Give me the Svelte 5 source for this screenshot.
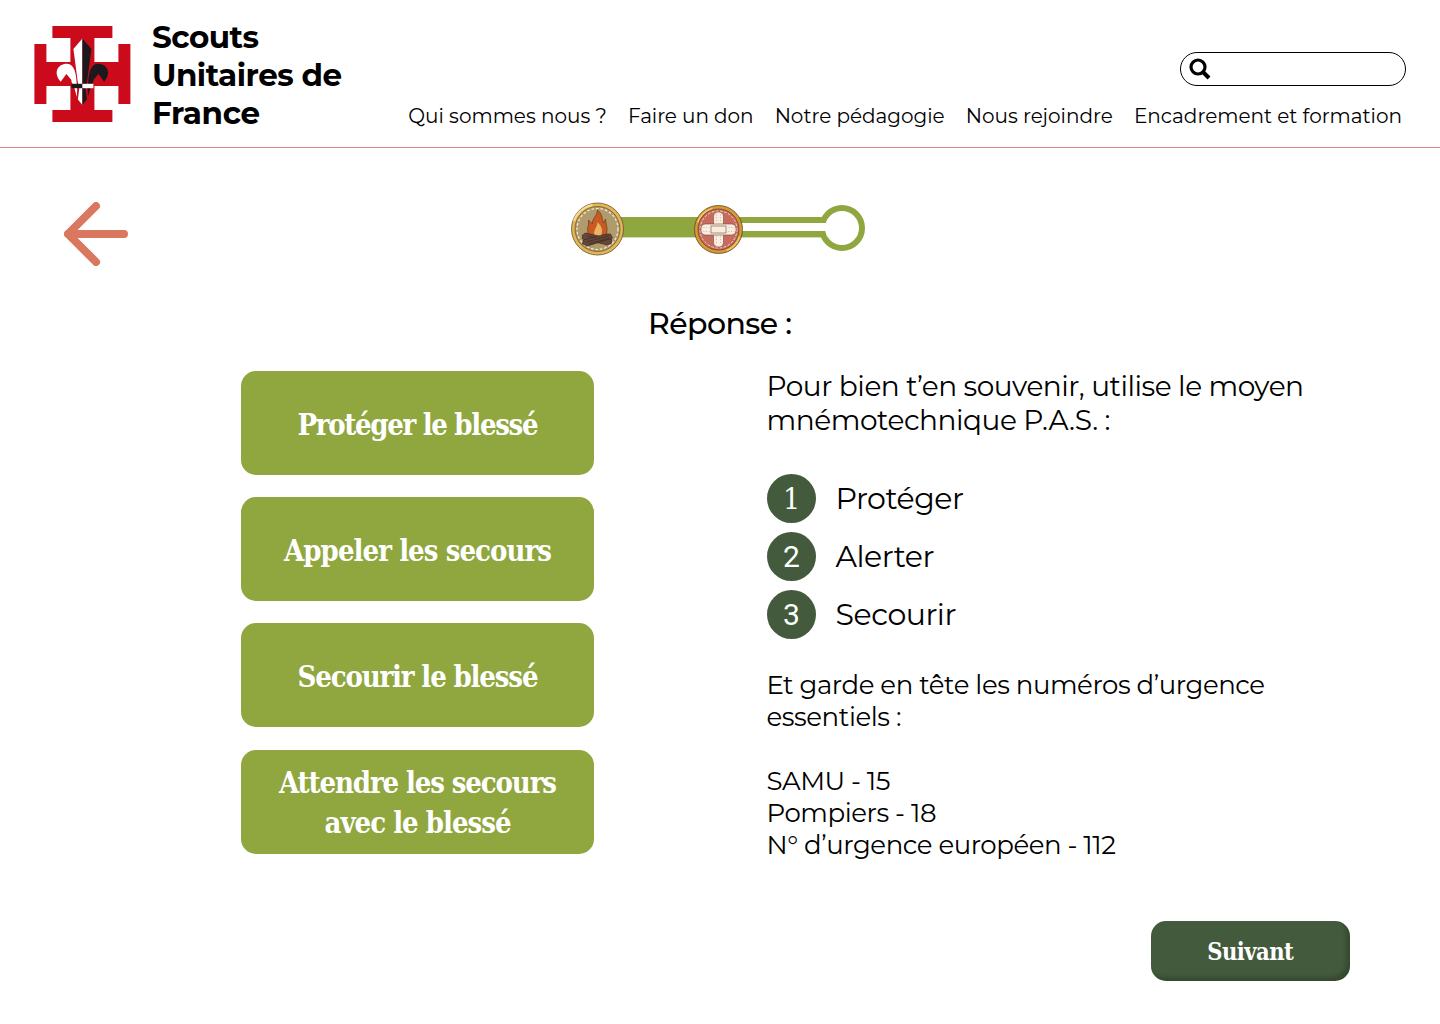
<script>
  const nav = [
    ['Qui sommes nous ?', 198.5],
    ['Faire un don', 125.5],
    ['Notre pédagogie', 170],
    ['Nous rejoindre', 147],
    ['Encadrement et formation', 268]
  ];
  const answers = [
    [['Protéger le blessé', 241]],
    [['Appeler les secours', 268]],
    [['Secourir le blessé', 241]],
    [['Attendre les secours', 278], ['avec le blessé', 187]]
  ];
  const steps = [['Protéger', 128.5], ['Alerter', 99], ['Secourir', 121]];
  const numbers = [['SAMU - 15', 124], ['Pompiers - 18', 170], ['N° d’urgence européen - 112', 349.5]];
  const stitches = '2.6 1.9';

  // Spreads the letters so that a line takes the given width in any font.
  function fit(node, width) {
    const natural = node.getBoundingClientRect().width;
    const spacing = (width - natural) / (node.textContent.length - 1);
    node.style.letterSpacing = `${spacing}px`;
    node.style.marginRight = `${-spacing}px`;
  }
</script>

{#snippet line(text, width)}<span class="line" use:fit={width}>{text}</span>{/snippet}

<div class="page">
  <header>
    <a class="brand" href="#accueil">
      <svg class="logo" width="98" height="98" viewBox="-0.4 0 98 98">
        <path fill="#cb0b1b" d="M19 0H79V12H61V36H85V18H97V78H85V60H61V84H79V96H19V84H37V60H13V78H1V18H13V36H37V12H19Z" />
        <path fill="#fff" d="M49 12.500 40 23 44.500 57 46 61 44.500 73.500 49 79ZM43.300 58C43 48 41 37.800 33.500 37.800 24 37.800 19.500 47 27.300 55.800L33 48 38 54C37.500 57 41 59 41.500 64L43.500 71 43.800 62Z" />
        <path fill="#1b191b" d="M49 12.500 58 23 53.500 57 52 61 53.500 73.500 49 79ZM54.700 58C55 48 57 37.800 64.500 37.800 74 37.800 78.500 47 70.700 55.800L65 48 60 54C60.500 57 57 59 56.500 64L54.500 71 54.200 62Z" />
        <path fill="#1b191b" d="M38 57.800H49V62.200H38Z" />
        <path fill="#fff" d="M49 57.800H60V62.200H49Z" />
      </svg>
      <span class="name">
        {@render line('Scouts', 107)}
        {@render line('Unitaires de', 190)}
        {@render line('France', 108)}
      </span>
    </a>
    <div class="tools">
      <label class="search">
        <svg width="22" height="22" viewBox="0 0 22 22" fill="none" stroke="#000">
          <circle cx="9" cy="9" r="7" stroke-width="3.200" />
          <path d="m14 14 6 6" stroke-width="4" />
        </svg>
        <input aria-label="Rechercher" />
      </label>
      <nav>
        {#each nav as [text, width]}<a href="#menu">{@render line(text, width)}</a>{/each}
      </nav>
    </div>
  </header>

  <main>
    <div class="top">
      <svg class="back" width="64" height="64" viewBox="0 0 64 64" fill="none" stroke="#d9775f" stroke-width="8" stroke-linecap="round" stroke-linejoin="round">
        <path d="M32 4 4 32 32 60M4 32H60" />
      </svg>
      <svg class="progress" width="296" height="56" viewBox="0 0 296 56">
        <path fill="#90a63f" d="M50 16H150V36H50Z" />
        <path fill="#90a63f" d="M150 16H260V22H150ZM150 30H260V36H150Z" />
        <path fill="#d2dcae" d="M50 36H252V37H50Z" />
        <circle cx="272" cy="27" r="20" fill="#fff" stroke="#90a63f" stroke-width="6" />
        <path fill="#fff" d="M240 22H258V30H240Z" />

        <g transform="translate(27.500 28)">
          <circle r="26" fill="#e5b552" stroke="#665035" stroke-width=".8" />
          <path d="M-23.500-8A24.500 24.500 0 0 1-5-24" fill="none" stroke="#f7dc93" stroke-width="2" />
          <circle r="22.500" fill="#b09b6c" stroke="#715c37" stroke-width=".8" />
          <circle r="20.500" fill="none" stroke="#f5edda" stroke-width="1.200" stroke-dasharray={stitches} />
          <path d="M-7 8C-11 4-10-1-9-4L-9-9-5-5C-6-10 0-13 0-19 6-14 4-9 6-6L8-10C8-5 12 2 7 8Z" fill="#c85a22" stroke="#713719" stroke-width=".7" />
          <path d="M-2 8C-6 2 0-1 0-7 6-1 5 4 3 8Z" fill="#e9b565" />
          <g stroke="#402a20" stroke-width=".7" fill="#65483a">
            <path d="m-15 6 3-2 26 6v4l-4 2-25-6Z" />
            <path d="m13 5 2 4-25 8-5-2 1-4 23-6Z" />
            <path d="m-11 13 22-6M-9 15l21-6M-10 7l8 2" fill="none" />
          </g>
        </g>

        <g transform="translate(148.500 28.500)">
          <circle r="24" fill="#d69a32" stroke="#604326" stroke-width=".8" />
          <path d="M-21-7A22 22 0 0 1-6-21M21 7A22 22 0 0 1 8 21" fill="none" stroke="#f1c865" stroke-width="1.500" />
          <circle r="20.500" fill="#c76b5e" stroke="#6d3e30" stroke-width=".8" />
          <circle r="18.500" fill="none" stroke="#f4d4ca" stroke-width="1" stroke-dasharray="2.600 1.600" />
          <g fill="#fbece0" stroke="#6f493c" stroke-width=".6">
            <rect x="-5" y="-17.500" width="10" height="35" rx="4.500" />
            <rect x="-17.500" y="-5.500" width="35" height="11" rx="4.500" />
            <rect x="-7.500" y="-3.500" width="15" height="7" />
          </g>
          <g fill="none" stroke="#b59a8c" stroke-width=".8" stroke-dasharray=".8 2">
            <path d="M-15-2H-9M-15 2H-9M10-2H16M10 2H16M-2-15V-7M2-15V-7M-2 7V15M2 7V15" />
          </g>
        </g>
      </svg>
    </div>

    <h1>{@render line('Réponse :', 144)}</h1>

    <div class="columns">
      <div class="answers">
        {#each answers as lines}
          <button class="answer">
            {#each lines as [text, width]}{@render line(text, width)}{/each}
          </button>
        {/each}
      </div>

      <section class="lesson">
        <p class="intro">
          {@render line('Pour bien t’en souvenir, utilise le moyen', 537.5)}
          {@render line('mnémotechnique P.A.S. :', 344)}
        </p>
        <ol>
          {#each steps as [text, width], i}
            <li><span class="badge" class:slab={i === 0}>{i + 1}</span>{@render line(text, width)}</li>
          {/each}
        </ol>
        <p class="note">
          {@render line('Et garde en tête les numéros d’urgence', 498.5)}
          {@render line('essentiels :', 135)}
        </p>
        <p class="note">
          {#each numbers as [text, width]}{@render line(text, width)}{/each}
        </p>
      </section>
    </div>

    <button class="next">{@render line('Suivant', 86.5)}</button>
  </main>
</div>

<style>
  :global(body) { margin: 0; background: #fff; }
  .page {
    width: 1440px;
    height: 1024px;
    overflow: hidden;
    box-sizing: border-box;
    font-family: Montserrat, Inter, sans-serif;
    color: #000;
  }
  .line { display: block; width: max-content; white-space: nowrap; }
  a { color: inherit; text-decoration: none; }
  header {
    display: flex;
    justify-content: space-between;
    box-sizing: border-box;
    height: 148px;
    padding: 18px 34px 0 33px;
    border-bottom: 1px solid #dd8290;
  }
  .brand { display: flex; gap: 21px; }
  .logo { margin-top: 8px; }
  .name { font-size: 31px; font-weight: 700; line-height: 38px; }
  .tools { display: flex; flex-direction: column; align-items: flex-end; padding-top: 34px; }
  .search {
    display: flex;
    align-items: center;
    box-sizing: border-box;
    width: 226px;
    height: 34px;
    padding-left: 8px;
    border: 1px solid #000;
    border-radius: 17px;
  }
  .search input { width: 170px; border: 0; outline: 0; background: none; }
  nav {
    display: flex;
    gap: 21.200px;
    margin: 18px 4px 0 0;
    font-size: 20px;
    line-height: 24px;
  }
  main { display: flex; flex-direction: column; }
  .top { display: flex; padding: 53px 0 0 64px; }
  .back { margin-top: 1px; }
  .progress { margin-left: 442px; }
  h1 {
    display: flex;
    justify-content: center;
    margin: 38px 0 0;
    font-size: 30px;
    font-weight: 500;
    line-height: 40px;
  }
  .columns { display: flex; gap: 172.500px; padding: 27px 0 0 241px; }
  .answers { display: flex; flex-direction: column; gap: 22.200px; }
  .answer {
    display: flex;
    flex-direction: column;
    align-items: center;
    justify-content: center;
    width: 353px;
    height: 104px;
    padding: 3px 0 0 1px;
    border: 0;
    border-radius: 15px;
    background: #90a63f;
    color: #fff;
    font: 700 29px/40px 'Roboto Slab', 'DejaVu Serif Condensed', 'DejaVu Serif', serif;
  }
  .intro { margin: -2px 0 0; font-size: 28px; line-height: 34px; }
  ol {
    display: flex;
    flex-direction: column;
    gap: 9px;
    margin: 37px 0 30px;
    padding: 0;
    list-style: none;
  }
  li { display: flex; align-items: center; gap: 20px; height: 49px; font-size: 30px; line-height: 47px; }
  .badge {
    width: 49px;
    height: 49px;
    border-radius: 50%;
    background: #435b3c;
    color: #fff;
    text-align: center;
    text-indent: 1px;
    font: 400 30px/49px 'Roboto Slab', Roboto, sans-serif;
  }
  .badge.slab { font-family: 'Roboto Slab', 'DejaVu Serif Condensed', 'DejaVu Serif', serif; }
  .note { margin: 0 0 32px; font-size: 26px; line-height: 32px; }
  .next {
    display: flex;
    align-items: center;
    justify-content: center;
    align-self: flex-end;
    width: 199px;
    height: 60px;
    margin: 28px 90px 0 0;
    padding: 2px 0 0;
    border: 0;
    border-radius: 15px;
    background: #435b3c;
    box-shadow: inset -4px -4px 4px rgb(0 0 0 / 20%);
    color: #fff;
    font: 700 23.500px/30px 'Roboto Slab', 'DejaVu Serif Condensed', 'DejaVu Serif', serif;
  }
</style>
